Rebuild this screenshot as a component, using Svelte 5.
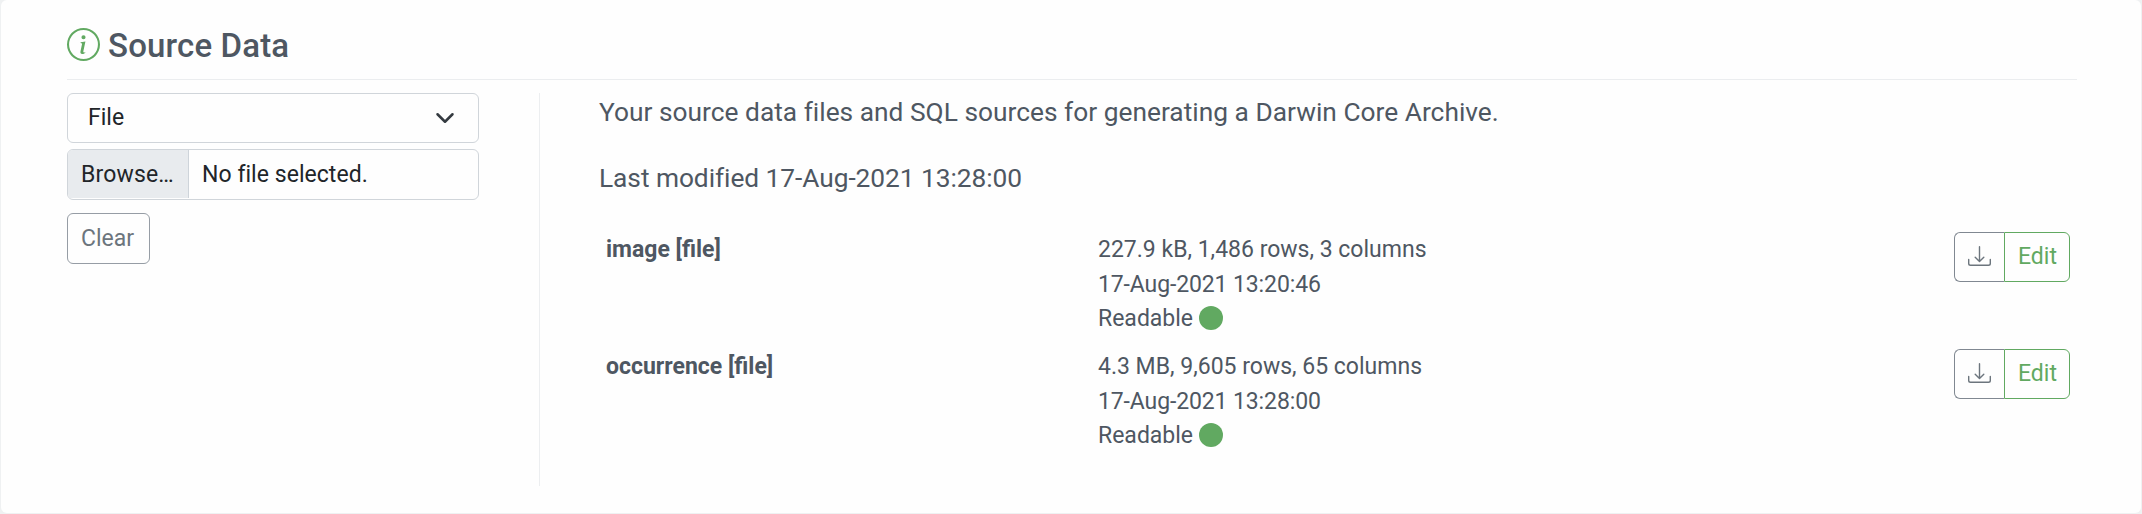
<script>
  const sources = [
    { name: 'image', size: '227.9 kB', rows: '1,486', columns: 3, modified: '17-Aug-2021 13:20:46' },
    { name: 'occurrence', size: '4.3 MB', rows: '9,605', columns: 65, modified: '17-Aug-2021 13:28:00' }
  ];
</script>

<section class="card">
  <header>
    <svg class="info" viewBox="0 0 16 16" fill="currentColor">
      <path d="M8 15A7 7 0 1 1 8 1a7 7 0 0 1 0 14zm0 1A8 8 0 1 0 8 0a8 8 0 0 0 0 16z" />
      <path d="m8.930 6.588-2.290.287-.082.380.450.083c.294.070.352.176.288.469l-.738 3.468c-.194.897.105 1.319.808 1.319.545 0 1.178-.252 1.465-.598l.088-.416c-.200.176-.492.246-.686.246-.275 0-.375-.193-.304-.533L8.930 6.588zM9 4.500a1 1 0 1 1-2 0 1 1 0 0 1 2 0z" />
    </svg>
    <h5>Source Data</h5>
  </header>
  <div class="body">
    <div class="controls">
      <div class="select">
        <span>File</span>
        <svg viewBox="0 0 16 16" fill="none" stroke="#343a40" stroke-linecap="round" stroke-linejoin="round" stroke-width="2"><path d="m2 5 6 6 6-6" /></svg>
      </div>
      <div class="file">
        <span class="browse">Browse…</span>
        <span class="chosen">No file selected.</span>
      </div>
      <button class="clear">Clear</button>
    </div>
    <div class="details">
      <p>Your source data files and SQL sources for generating a Darwin Core Archive.</p>
      <p class="modified">Last modified 17-Aug-2021 13:28:00</p>
      <div class="table">
        {#each sources as s}
          <div class="row">
            <strong>{s.name} [file]</strong>
            <div class="meta">
              <div>{s.size}, {s.rows} rows, {s.columns} columns</div>
              <div class="date">{s.modified}</div>
              <div class="status">Readable <i></i></div>
            </div>
            <div class="group">
              <button class="download" aria-label="Download">
                <svg viewBox="0 0 23 20" fill="none" stroke="currentColor" stroke-width="1.4" stroke-linecap="round" stroke-linejoin="round">
                  <path d="M.7 13.500v4q0 1.800 1.800 1.800h18q1.800 0 1.800-1.800v-4M11.500.700v14.500M7.200 11.200l4.300 4.200 4.300-4.200" />
                </svg>
              </button>
              <button class="edit">Edit</button>
            </div>
          </div>
        {/each}
      </div>
    </div>
  </div>
</section>

<style>
  :global(body) { background: #eff1f2; }
  .card {
    box-sizing: border-box;
    width: 2140px;
    height: 513px;
    margin-left: 1px;
    padding: 0 64px 0 66px;
    background: #fefefe;
    border-radius: 6px;
    font-family: Roboto, sans-serif;
    font-size: 23px;
    line-height: 34.5px;
    color: #4e5762;
  }
  header {
    box-sizing: border-box;
    display: flex;
    align-items: center;
    gap: 8px;
    height: 80px;
    padding-top: 10px;
    border-bottom: 1px solid #ebedef;
  }
  .info { width: 33px; height: 33px; color: #61a961; }
  h5 { margin: 0; padding-top: 2px; font-size: 33px; font-weight: 500; line-height: 40px; letter-spacing: 0.15px; }
  .body { display: flex; padding-top: 13px; }
  .controls {
    box-sizing: border-box;
    width: 473px;
    height: 393px;
    padding-right: 60px;
    border-right: 1px solid #eceef0;
  }
  .select, .file {
    box-sizing: border-box;
    display: flex;
    align-items: center;
    width: 412px;
    border: 1px solid #d0d5da;
    border-radius: 6px;
    color: #212529;
  }
  .select { height: 50px; justify-content: space-between; padding: 0 23px 0 20px; }
  .select svg { width: 20px; height: 20px; }
  .file { height: 51px; margin-top: 6px; overflow: hidden; }
  .browse {
    box-sizing: border-box;
    align-self: stretch;
    width: 121px;
    padding: 8px 0 0 13px;
    background: #e8ebee;
    border-right: 1px solid #ced4da;
    margin-bottom: 1px;
    letter-spacing: 0.15px;
  }
  .chosen { padding-left: 13px; padding-top: 1px; letter-spacing: 0.05px; }
  button {
    box-sizing: border-box;
    display: block;
    margin: 0;
    padding: 0;
    background: none;
    font: inherit;
  }
  .clear {
    width: 83px;
    height: 51px;
    margin-top: 13px;
    padding: 1px 2px 0 0;
    border: 1px solid #969da5;
    border-radius: 6px;
    color: #6c757d;
  }
  .details { flex: 1; padding-left: 59px; }
  p { margin: 0; font-size: 26.300px; line-height: 39.500px; letter-spacing: 0.015px; }
  p.modified { margin-top: 26px; letter-spacing: -0.05px; }
  .table { margin-top: 28px; }
  .row {
    display: grid;
    grid-template-columns: 492px 1fr 116px;
    height: 117.300px;
    padding: 6px 7px 0;
    box-sizing: border-box;
  }
  strong { padding-top: 1px; font-weight: 700; }
  .meta { padding-top: 1px; }
  .date { letter-spacing: -0.12px; }
  .status { display: flex; align-items: center; gap: 6px; }
  .status i { width: 24px; height: 24px; margin-top: -3px; border-radius: 50%; background: #61a961; }
  .group { display: flex; height: 50px; }
  .group button { height: 50px; }
  .download {
    display: grid;
    place-items: center;
    width: 50px;
    border: 1px solid #808891;
    border-right: 0;
    border-radius: 6px 0 0 6px;
    color: #6c757d;
  }
  .download svg { width: 23px; height: 20px; margin-top: -3px; }
  .edit {
    width: 66px;
    padding-left: 1px;
    border: 1px solid #61a961;
    border-radius: 0 6px 6px 0;
    color: #61a961;
  }
</style>
